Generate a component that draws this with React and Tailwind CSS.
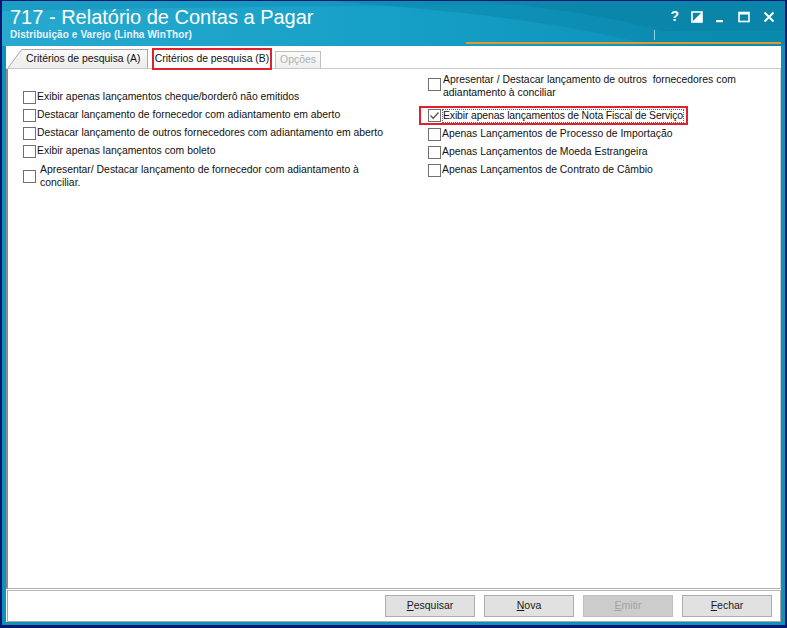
import React from 'react';

const leftOptions = [
  { id: 1, label: 'Exibir apenas lançamentos cheque/borderô não emitidos' },
  { id: 2, label: 'Destacar lançamento de fornecedor com adiantamento em aberto' },
  { id: 3, label: 'Destacar lançamento de outros fornecedores com adiantamento em aberto' },
  { id: 4, label: 'Exibir apenas lançamentos com boleto' },
];

const rightOptions = [
  { id: 7, label: 'Apenas Lançamentos de Processo de Importação' },
  { id: 8, label: 'Apenas Lançamentos de Moeda Estrangeira' },
  { id: 9, label: 'Apenas Lançamentos de Contrato de Câmbio' },
];

const Checkbox = ({ checked }) => (
  <span className="w-[13px] h-[13px] shrink-0 border border-[#707070] bg-white flex items-center justify-center">
    {checked && (
      <svg width="11" height="11" viewBox="0 0 11 11">
        <path d="M1.5 5.5 L4.2 8.2 L9.5 2.5" fill="none" stroke="#555" strokeWidth="1.3" />
      </svg>
    )}
  </span>
);

const Row = ({ label, checked }) => (
  <div className="flex items-center gap-[1px] h-[18px]">
    <Checkbox checked={checked} />
    <span className="whitespace-nowrap">{label}</span>
  </div>
);

const Button = ({ first, rest, disabled }) => (
  <button
    className={`w-[90px] h-[22px] border text-[10.5px] ${
      disabled ? 'bg-[#cccccc] border-[#bfbfbf] text-[#a3a3a3]' : 'bg-[#e1e1e1] border-[#adadad] text-[#1a1a1a]'
    }`}
  >
    <span className="underline">{first}</span>
    {rest}
  </button>
);

const App = () => {
  return (
    <div
      className="w-[787px] h-[628px] bg-[#0a1670] pt-[1px] pl-[2px] pr-[2px] pb-[3px] overflow-hidden"
      style={{ fontFamily: '"Liberation Sans", Arial, sans-serif' }}
    >
      <div className="w-full h-full bg-[#0e93b8] flex flex-col px-[4px] pb-[3px]">
        {/* title bar */}
        <div className="relative h-[45px] shrink-0 -mx-[4px] px-[8px] pt-[5px] bg-gradient-to-r from-[#27a9cf] via-[#16a0c7] to-[#0a8cb2] overflow-hidden">
          <svg className="absolute inset-0 pointer-events-none" width="783" height="45" viewBox="0 0 783 45">
            <path d="M330 0 C 450 10, 560 20, 650 45 L 783 45 L 783 0 Z" fill="#0b86ab" opacity="0.55" />
            <path d="M480 0 C 560 8, 620 18, 660 30 L 783 30 L 783 0 Z" fill="#0a7fa3" opacity="0.5" />
            <path d="M0 0 L 783 0 L 783 6 C 600 2, 300 4, 0 10 Z" fill="#0c88ad" opacity="0.35" />
          </svg>
          <div className="relative text-white text-[20px] leading-[23px]">717 - Relatório de Contas a Pagar</div>
          <div className="relative text-[#eaf4ff] text-[10px] font-bold leading-[12px] tracking-[0.1px]">
            Distribuição e Varejo (Linha WinThor)
          </div>
          <div className="absolute right-[10px] top-[5px] flex items-center gap-[12px] text-white font-bold text-[14px]">
            <span>?</span>
            <svg width="12" height="12" viewBox="0 0 12 12">
              <rect x="1" y="1" width="10" height="10" fill="none" stroke="white" strokeWidth="1.6" />
              <path d="M11 1 L1 11 L11 11 Z" fill="white" />
            </svg>
            <svg width="10" height="12" viewBox="0 0 10 12">
              <rect x="1" y="9" width="7" height="2.2" fill="white" />
            </svg>
            <svg width="14" height="12" viewBox="0 0 14 12">
              <rect x="2" y="1.5" width="10" height="9" fill="none" stroke="white" strokeWidth="1.6" />
              <rect x="2" y="1" width="10" height="2.5" fill="white" />
            </svg>
            <svg width="12" height="12" viewBox="0 0 12 12">
              <path d="M1.5 1.5 L10.5 10.5 M10.5 1.5 L1.5 10.5" stroke="white" strokeWidth="2" />
            </svg>
          </div>
          <div className="absolute right-[4px] bottom-[2px] w-[315px] h-[2px] bg-[#e39a2d]" />
          <div className="absolute right-[130px] bottom-[6px] w-[1px] h-[10px] bg-[#8fd0e6]" />
        </div>

        {/* body */}
        <div className="flex-1 bg-white flex flex-col text-[10.4px] text-[#111]">
          {/* tabs */}
          <div className="h-[23px] flex items-end border-b border-[#c8c8c8] pl-[2px] shrink-0 whitespace-nowrap">
            <div className="flex items-end h-[19px]">
              <svg width="14" height="19" viewBox="0 0 14 19" className="shrink-0">
                <path d="M0 19 L13 1 L14 1 L14 19 Z" fill="#f0f0f0" />
                <path d="M0 19 L13.5 0.5" stroke="#a8a8a8" strokeWidth="1" />
              </svg>
              <div className="h-[19px] w-[126px] bg-gradient-to-b from-[#fafafa] to-[#ececec] border-t border-r border-[#a8a8a8] flex items-center pl-[4px]">
                Critérios de pesquisa (A)
              </div>
            </div>
            <div className="ml-[4px] h-[22px] w-[120px] border-2 border-[#e0202a] bg-white flex items-center justify-center -mb-[2px] relative">
              Critérios de pesquisa (B)
            </div>
            <div className="ml-[3px] h-[17px] w-[46px] bg-gradient-to-b from-[#fafafa] to-[#efefef] border-t border-r border-l border-[#c0c0c0] flex items-center justify-center text-[#b0b0b0]">
              Opções
            </div>
          </div>

          {/* tab panel */}
          <div className="flex-1 border-l-2 border-r border-b border-[#8a8a8a] border-r-[#d0d0d0] border-b-[#b0b0b0] flex pt-[4px]">
            <div className="w-[412px] pl-[15px] pt-[15px] flex flex-col">
              {leftOptions.map((o) => (
                <Row key={o.id} label={o.label} />
              ))}
              <div className="flex items-start gap-[4px] mt-[3px]">
                <span className="mt-[7px]">
                  <Checkbox />
                </span>
                <span className="leading-[13px] w-[340px]">
                  Apresentar/ Destacar lançamento de fornecedor com adiantamento à conciliar.
                </span>
              </div>
            </div>
            <div className="flex flex-col pl-[8px]">
              <div className="flex items-start gap-[2px]">
                <span className="mt-[5px]">
                  <Checkbox />
                </span>
                <span className="leading-[13px] w-[320px]">
                  Apresentar / Destacar lançamento de outros&nbsp; fornecedores com adiantamento à conciliar
                </span>
              </div>
              <div className="mt-[7px] -ml-[9px] w-[269px] h-[19px] border-2 border-[#e0202a] pl-[7px] flex items-center">
                <Checkbox checked />
                <span className="whitespace-nowrap border border-dotted border-[#666] leading-[12px] ml-[1px] tracking-[-0.12px]">
                  Exibir apenas lançamentos de Nota Fiscal de Serviço
                </span>
              </div>
              {rightOptions.map((o) => (
                <Row key={o.id} label={o.label} />
              ))}
            </div>
          </div>

          {/* button bar */}
          <div className="h-[32px] shrink-0 border border-[#a8a8a8] border-t-[#b8b8b8] ml-[1px] mt-[1px] flex items-center justify-end gap-[9px] pr-[8px]">
            <Button first="P" rest="esquisar" />
            <Button first="N" rest="ova" />
            <Button first="E" rest="mitir" disabled />
            <Button first="F" rest="echar" />
          </div>
        </div>
      </div>
    </div>
  );
};

export default App;
